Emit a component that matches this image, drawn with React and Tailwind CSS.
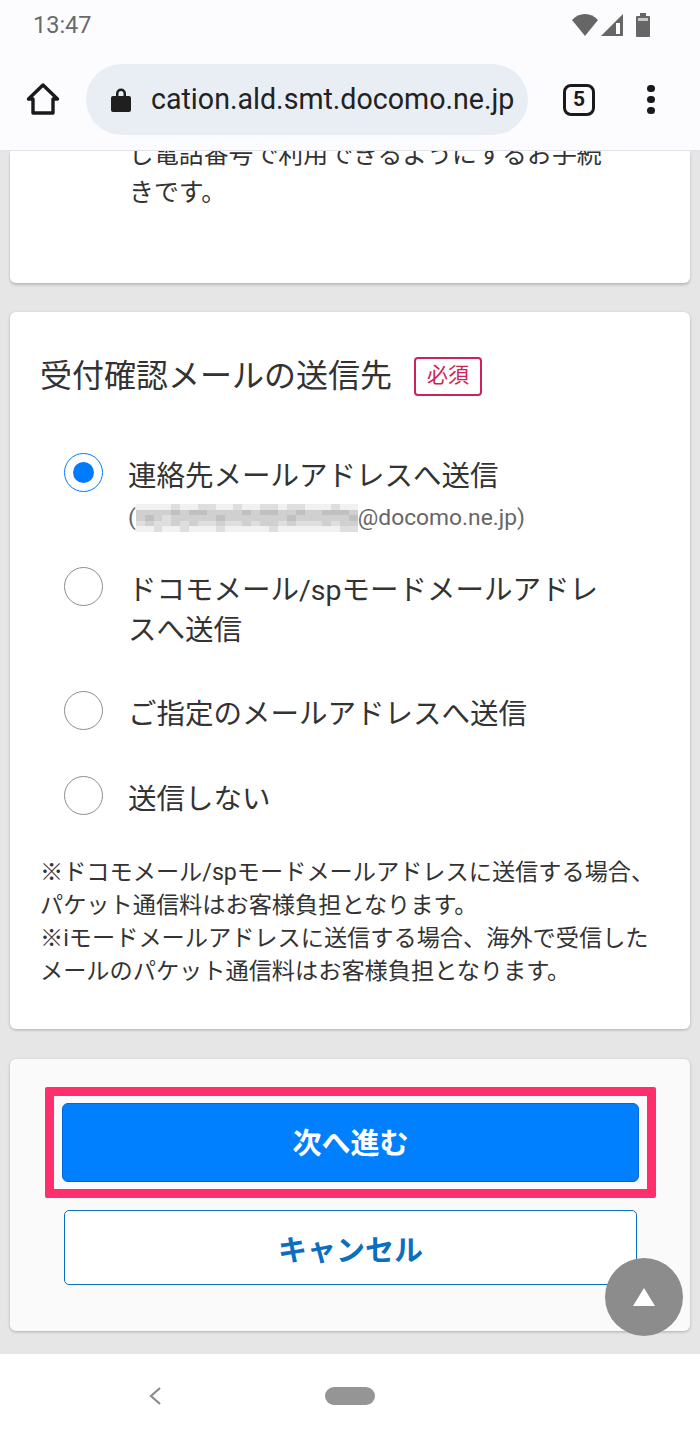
import React from 'react';

const blur = [
  [0,0,0,0,1,0,0,1,1,0,0,1,0,0,1,1,0,1,1,0,0,0,1,0,0],
  [2,2,2,2,3,2,3,3,2,2,2,2,3,2,3,3,2,2,3,2,2,3,3,3,2],
  [2,3,2,1,2,2,2,2,2,3,2,2,2,2,2,2,2,3,2,2,2,2,2,2,3],
  [1,2,1,1,2,1,2,1,1,2,1,1,2,1,2,2,1,2,1,1,1,2,1,2,2],
  [0,0,1,0,0,1,0,0,0,1,0,0,0,0,0,1,0,0,0,0,0,0,0,1,1],
];
const greys = ['#f1f1f1', '#dedede', '#d0d0d0', '#c0c0c0'];

function RadioOption({ checked = false, children, sub }) {
  return (
    <div className="flex gap-[25px]">
      <div className={`mt-[1px] h-[39px] w-[39px] shrink-0 rounded-full border flex items-center justify-center bg-white ${checked ? 'border-[#007bff]' : 'border-[#8e8e8e]'}`}>
        {checked && <div className="h-[21px] w-[21px] rounded-full bg-[#007bff]" />}
      </div>
      <div className="w-[480px] pt-[5px]">
        <div className="text-[28.5px] leading-[40px] text-[#333]">{children}</div>
        {sub}
      </div>
    </div>
  );
}

function EmailLine() {
  return (
    <div className="mt-[7px] flex h-[28px] items-center text-[22.8px] whitespace-nowrap text-[#666]">
      <span>(</span>
      <div className="grid h-[28px] w-[222px] shrink-0 grid-cols-[repeat(25,1fr)] grid-rows-5">
        {blur.flat().map((g, i) => (
          <div key={i} style={{ backgroundColor: greys[g] }} />
        ))}
      </div>
      <span>@docomo.ne.jp)</span>
    </div>
  );
}

export default function App() {
  return (
    <div className="relative flex h-[1438px] w-[700px] flex-col overflow-hidden bg-[#e6e6e6] font-['Roboto','Noto_Sans_CJK_JP',sans-serif]">
      {/* status bar + chrome toolbar */}
      <div className="z-10 h-[151px] shrink-0 border-b border-[#e2e3e8] bg-[#fcfcff]">
        <div className="flex h-[50px] items-center justify-between pl-[33px] pr-[50px] text-[#6a6a6a]">
          <span className="pt-[2px] text-[23.5px]">13:47</span>
          <div className="flex items-center">
            <svg width="26" height="22" viewBox="0 0 26 22" fill="#666"><path d="M0 6C3.500 2.200 8 0 13 0s9.500 2.200 13 6L13 22z" /></svg>
            <svg className="ml-[3px]" width="22" height="22" viewBox="0 0 22 22"><path d="M0 22L22 0v22z" fill="#666" /><path d="M15 9h4v11h-4z" fill="#fcfcff" /></svg>
            <svg className="ml-[13px]" width="14" height="24" viewBox="0 0 14 24" fill="#666"><path d="M4 0h6v3h3a1 1 0 0 1 1 1v19a1 1 0 0 1-1 1H1a1 1 0 0 1-1-1V4a1 1 0 0 1 1-1h3z" /><path d="M2 5h10v3H2z" fill="#c8c8c8" /></svg>
          </div>
        </div>
        <div className="flex h-[100px] items-start pt-[14px]">
          <div className="flex h-[71px] w-[86px] shrink-0 items-center justify-center pb-[1px]">
            <svg width="34" height="34" viewBox="0 0 34 34" fill="none" stroke="#1a1a1a" strokeWidth="3.400" strokeLinejoin="round"><path d="M17 3L2.500 17H7v14h20V17h4.500z" /></svg>
          </div>
          <div className="flex h-[71px] w-[442px] shrink-0 items-center rounded-full bg-[#e9eef5] pl-[25px]">
            <svg width="20" height="26" viewBox="0 0 20 26" fill="#1f1f1f"><path d="M5 9V6.500a5 5 0 0 1 10 0V9h3a2 2 0 0 1 2 2v12a2 2 0 0 1-2 2H2a2 2 0 0 1-2-2V11a2 2 0 0 1 2-2zm2.500 0h5V6.500a2.500 2.500 0 0 0-5 0z" /></svg>
            <span className="ml-[20px] whitespace-nowrap text-[28.6px] text-[#222]">cation.ald.smt.docomo.ne.jp</span>
          </div>
          <div className="flex h-[71px] flex-1 items-center pl-[35px]">
            <div className="flex h-[32px] w-[32px] items-center justify-center rounded-[8px] border-[3.500px] border-[#1a1a1a] text-[21px] font-bold text-[#1a1a1a]">5</div>
            <div className="ml-[52px] flex flex-col gap-[3.500px]">
              <div className="h-[7.500px] w-[7.500px] rounded-full bg-[#1a1a1a]" />
              <div className="h-[7.500px] w-[7.500px] rounded-full bg-[#1a1a1a]" />
              <div className="h-[7.500px] w-[7.500px] rounded-full bg-[#1a1a1a]" />
            </div>
          </div>
        </div>
      </div>

      {/* page, scrolled so the first card is cut off by the toolbar */}
      <div className="min-h-0 flex-1 overflow-hidden px-[10px]">
        <div className="h-[132px] overflow-hidden rounded-b-[6px] bg-white pl-[119px] pr-[80px] shadow-[0_2px_3px_rgba(0,0,0,0.2)]">
          <p className="mt-[-15px] text-[24.9px] leading-[38px] text-[#333]">じ電話番号で利用できるようにするお手続きです。</p>
        </div>

        <div className="mt-[29px] h-[717px] rounded-[6px] bg-white px-[30px] pt-[43px] shadow-[0_1px_3px_rgba(0,0,0,0.25)]">
          <div className="flex items-center">
            <h2 className="text-[32px] leading-[42px] font-normal text-[#333]">受付確認メールの送信先</h2>
            <span className="ml-[22px] flex h-[39px] w-[68px] items-center justify-center rounded-[4px] border-2 border-[#cc2456] text-[21px] text-[#cc2456]">必須</span>
          </div>
          <div className="mt-[55px] flex flex-col pl-[24px]">
            <RadioOption checked sub={<EmailLine />}>連絡先メールアドレスへ送信</RadioOption>
            <div className="mt-[34px]">
              <RadioOption>ドコモメール/spモードメールアドレスへ送信</RadioOption>
            </div>
            <div className="mt-[39px]">
              <RadioOption>ご指定のメールアドレスへ送信</RadioOption>
            </div>
            <div className="mt-[40px]">
              <RadioOption>送信しない</RadioOption>
            </div>
          </div>
          <p className="mt-[36px] text-[23.2px] leading-[33px] text-[#333]">
            ※ドコモメール/spモードメールアドレスに送信する場合、パケット通信料はお客様負担となります。
            <br />
            ※iモードメールアドレスに送信する場合、海外で受信したメールのパケット通信料はお客様負担となります。
          </p>
        </div>

        <div className="mt-[30px] h-[272px] rounded-[6px] bg-[#fafafa] pl-[35px] pr-[34px] pt-[28px] shadow-[0_1px_3px_rgba(0,0,0,0.25)]">
          <div className="rounded-[2px] border-[9px] border-[#ff2e6c] px-[8px] py-[7px]">
            <button className="flex h-[79px] w-full items-center justify-center rounded-[6px] border border-[#0069d9] bg-[#007fff] pt-[5px] text-[29px] font-bold text-white">次へ進む</button>
          </div>
          <button className="mx-auto mt-[12px] flex h-[75px] w-[573px] items-center justify-center rounded-[5px] border border-[#0b6fbf] bg-white pt-[8px] text-[29px] font-bold text-[#0b6fbf]">キャンセル</button>
        </div>
      </div>

      {/* android nav */}
      <div className="relative z-10 flex h-[84px] shrink-0 items-center justify-center bg-white">
        <svg className="absolute left-[148px] top-[32px]" width="14" height="20" viewBox="0 0 14 20" fill="none" stroke="#8c8c8c" strokeWidth="2.200"><path d="M12 2L3 10l9 8" /></svg>
        <div className="h-[18px] w-[50px] rounded-full bg-[#959595]" />
      </div>

      {/* back to top */}
      <div className="absolute left-[605px] top-[1258px] z-20 flex h-[78px] w-[78px] items-center justify-center rounded-full bg-[#8c8c8c]">
        <svg width="22" height="18" viewBox="0 0 22 18" fill="#fff"><path d="M11 0l11 18H0z" /></svg>
      </div>
    </div>
  );
}
